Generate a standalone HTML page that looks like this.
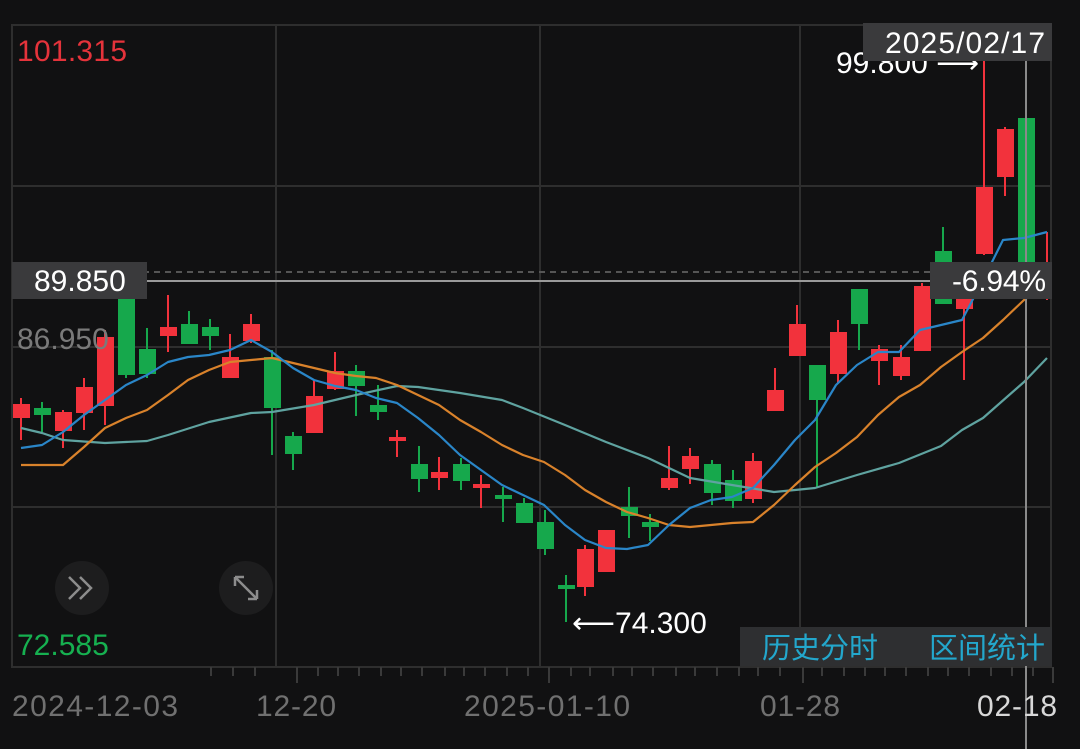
<!DOCTYPE html><html><head><meta charset="utf-8"><style>
html,body{margin:0;padding:0;background:#111112;width:1080px;height:749px;overflow:hidden}
svg{display:block}
text{font-family:"Liberation Sans","Noto Sans CJK SC",sans-serif}
</style></head><body>
<svg width="1080" height="749" viewBox="0 0 1080 749" xmlns="http://www.w3.org/2000/svg">
<rect width="1080" height="749" fill="#111112"/>
<g stroke="#2e2e2e" stroke-width="2" fill="none">
<rect x="12" y="25" width="1039" height="642"/>
<line x1="12" y1="186" x2="1051" y2="186"/><line x1="12" y1="347" x2="1051" y2="347"/><line x1="12" y1="507" x2="1051" y2="507"/>
<line x1="276" y1="25" x2="276" y2="667"/><line x1="540" y1="25" x2="540" y2="667"/><line x1="800" y1="25" x2="800" y2="667"/>
</g>
<g stroke="#3a3a3a" stroke-width="2">
<line x1="211" y1="667" x2="211" y2="676"/><line x1="233" y1="667" x2="233" y2="676"/><line x1="255" y1="667" x2="255" y2="676"/><line x1="297" y1="667" x2="297" y2="683"/><line x1="318" y1="667" x2="318" y2="676"/><line x1="338" y1="667" x2="338" y2="676"/><line x1="359" y1="667" x2="359" y2="676"/><line x1="381" y1="667" x2="381" y2="676"/><line x1="401" y1="667" x2="401" y2="676"/><line x1="422" y1="667" x2="422" y2="676"/><line x1="445" y1="667" x2="445" y2="676"/><line x1="464" y1="667" x2="464" y2="676"/><line x1="485" y1="667" x2="485" y2="676"/><line x1="507" y1="667" x2="507" y2="676"/><line x1="528" y1="667" x2="528" y2="676"/><line x1="549" y1="667" x2="549" y2="683"/><line x1="571" y1="667" x2="571" y2="676"/><line x1="590" y1="667" x2="590" y2="676"/><line x1="613" y1="667" x2="613" y2="676"/><line x1="632" y1="667" x2="632" y2="676"/><line x1="653" y1="667" x2="653" y2="676"/><line x1="676" y1="667" x2="676" y2="676"/><line x1="695" y1="667" x2="695" y2="676"/><line x1="717" y1="667" x2="717" y2="676"/><line x1="739" y1="667" x2="739" y2="676"/><line x1="758" y1="667" x2="758" y2="676"/><line x1="780" y1="667" x2="780" y2="676"/><line x1="803" y1="667" x2="803" y2="683"/><line x1="822" y1="667" x2="822" y2="676"/><line x1="844" y1="667" x2="844" y2="676"/><line x1="865" y1="667" x2="865" y2="676"/><line x1="885" y1="667" x2="885" y2="676"/><line x1="906" y1="667" x2="906" y2="676"/><line x1="928" y1="667" x2="928" y2="676"/><line x1="948" y1="667" x2="948" y2="676"/><line x1="969" y1="667" x2="969" y2="676"/><line x1="991" y1="667" x2="991" y2="676"/><line x1="1012" y1="667" x2="1012" y2="676"/><line x1="1033" y1="667" x2="1033" y2="676"/><line x1="1053" y1="667" x2="1053" y2="683"/>
</g>
<line x1="143" y1="272" x2="1051" y2="272" stroke="#555" stroke-width="2" stroke-dasharray="6,5"/>
<line x1="143" y1="281" x2="1051" y2="281" stroke="#9a9a9a" stroke-width="2"/>
<g stroke-width="2">
<g stroke="#f2323c" fill="#f2323c">
<line x1="21" y1="398" x2="21" y2="440"/><rect x="14" y="405" width="15" height="12"/>
<line x1="63" y1="410" x2="63" y2="448"/><rect x="56" y="413" width="15" height="17"/>
<line x1="84" y1="378" x2="84" y2="430"/><rect x="77" y="388" width="15" height="24"/>
<line x1="105" y1="330" x2="105" y2="425"/><rect x="98" y="338" width="15" height="67"/>
<line x1="168" y1="295" x2="168" y2="352"/><rect x="161" y="328" width="15" height="7"/>
<line x1="230" y1="334" x2="230" y2="378"/><rect x="223" y="358" width="15" height="19"/>
<line x1="251" y1="314" x2="251" y2="343"/><rect x="244" y="325" width="15" height="15"/>
<line x1="314" y1="380" x2="314" y2="432"/><rect x="307" y="397" width="15" height="35"/>
<line x1="335" y1="352" x2="335" y2="390"/><rect x="328" y="372" width="15" height="16"/>
<line x1="397" y1="430" x2="397" y2="457"/><rect x="390" y="438" width="15" height="2"/>
<line x1="439" y1="457" x2="439" y2="490"/><rect x="432" y="473" width="15" height="4"/>
<line x1="481" y1="475" x2="481" y2="508"/><rect x="474" y="485" width="15" height="2"/>
<line x1="585" y1="545" x2="585" y2="596"/><rect x="578" y="550" width="15" height="36"/>
<line x1="606" y1="531" x2="606" y2="572"/><rect x="599" y="531" width="15" height="40"/>
<line x1="669" y1="446" x2="669" y2="490"/><rect x="662" y="479" width="15" height="8"/>
<line x1="690" y1="448" x2="690" y2="484"/><rect x="683" y="457" width="15" height="11"/>
<line x1="753" y1="453" x2="753" y2="503"/><rect x="746" y="462" width="15" height="36"/>
<line x1="775" y1="368" x2="775" y2="410"/><rect x="768" y="391" width="15" height="19"/>
<line x1="797" y1="305" x2="797" y2="355"/><rect x="790" y="325" width="15" height="30"/>
<line x1="838" y1="320" x2="838" y2="383"/><rect x="831" y="333" width="15" height="40"/>
<line x1="879" y1="345" x2="879" y2="385"/><rect x="872" y="350" width="15" height="10"/>
<line x1="901" y1="345" x2="901" y2="380"/><rect x="894" y="358" width="15" height="17"/>
<line x1="922" y1="283" x2="922" y2="350"/><rect x="915" y="287" width="15" height="63"/>
<line x1="964" y1="300" x2="964" y2="380"/><rect x="957" y="300" width="15" height="8"/>
<line x1="984" y1="60" x2="984" y2="255"/><rect x="977" y="188" width="15" height="65"/>
<line x1="1005" y1="127" x2="1005" y2="196"/><rect x="998" y="130" width="15" height="46"/>
<line x1="1047" y1="232" x2="1047" y2="300"/>
</g>
<g stroke="#16a84c" fill="#16a84c">
<line x1="42" y1="402" x2="42" y2="432"/><rect x="35" y="409" width="15" height="5"/>
<line x1="126" y1="298" x2="126" y2="378"/><rect x="119" y="300" width="15" height="74"/>
<line x1="147" y1="328" x2="147" y2="378"/><rect x="140" y="350" width="15" height="23"/>
<line x1="189" y1="311" x2="189" y2="343"/><rect x="182" y="325" width="15" height="18"/>
<line x1="210" y1="319" x2="210" y2="350"/><rect x="203" y="328" width="15" height="7"/>
<line x1="272" y1="350" x2="272" y2="455"/><rect x="265" y="358" width="15" height="49"/>
<line x1="293" y1="432" x2="293" y2="470"/><rect x="286" y="437" width="15" height="16"/>
<line x1="356" y1="365" x2="356" y2="416"/><rect x="349" y="372" width="15" height="13"/>
<line x1="378" y1="385" x2="378" y2="420"/><rect x="371" y="406" width="15" height="5"/>
<line x1="419" y1="446" x2="419" y2="492"/><rect x="412" y="465" width="15" height="13"/>
<line x1="461" y1="458" x2="461" y2="490"/><rect x="454" y="465" width="15" height="15"/>
<line x1="503" y1="487" x2="503" y2="522"/><rect x="496" y="496" width="15" height="2"/>
<line x1="524" y1="498" x2="524" y2="522"/><rect x="517" y="504" width="15" height="18"/>
<line x1="545" y1="510" x2="545" y2="555"/><rect x="538" y="523" width="15" height="25"/>
<line x1="566" y1="575" x2="566" y2="622"/><rect x="559" y="586" width="15" height="2"/>
<line x1="629" y1="487" x2="629" y2="538"/><rect x="622" y="508" width="15" height="7"/>
<line x1="650" y1="514" x2="650" y2="541"/><rect x="643" y="523" width="15" height="3"/>
<line x1="712" y1="460" x2="712" y2="505"/><rect x="705" y="465" width="15" height="27"/>
<line x1="733" y1="470" x2="733" y2="508"/><rect x="726" y="481" width="15" height="19"/>
<line x1="817" y1="366" x2="817" y2="488"/><rect x="810" y="366" width="15" height="33"/>
<line x1="859" y1="290" x2="859" y2="350"/><rect x="852" y="290" width="15" height="33"/>
<line x1="943" y1="227" x2="943" y2="303"/><rect x="936" y="252" width="15" height="51"/>
<rect x="1019" y="119" width="15" height="171"/>
</g>
</g>
<g fill="none" stroke-width="2.2" stroke-linejoin="round">
<polyline stroke="#5fa3a0" points="21,428 42,433 63,440 105,443 147,441 168,435 209,422 251,413 272,412 314,405 356,395 397,386 418,387 439,390 460,393 502,400 523,408 565,425 606,442 648,458 690,478 732,485 774,492 795,490 815,488 857,475 899,463 941,446 962,430 983,418 1024,382 1047,358"/>
<polyline stroke="#d9822b" points="21,465 63,465 84,447 105,428 126,418 147,410 168,395 188,380 209,370 230,362 251,360 272,358 293,363 314,368 335,373 356,376 376,378 397,385 418,395 439,405 460,420 481,432 502,445 523,455 544,462 565,475 585,490 606,502 627,512 648,518 669,525 690,527 711,525 732,523 753,522 774,505 795,485 815,467 836,453 857,437 878,415 899,397 920,385 941,367 962,352 983,338 1003,320 1024,300 1047,285"/>
<polyline stroke="#2a86c8" points="21,448 42,445 63,432 84,415 105,400 126,385 147,375 168,362 188,357 209,355 230,350 251,340 272,352 293,368 314,380 335,386 356,390 376,398 397,403 418,418 439,435 460,455 481,470 502,485 523,495 544,505 565,525 585,540 606,548 627,549 648,545 669,525 690,508 711,500 732,497 753,488 774,465 795,440 815,420 836,385 857,365 878,352 899,352 920,330 941,325 962,320 983,280 1003,240 1024,238 1047,232"/>
</g>
<line x1="1026" y1="25" x2="1026" y2="749" stroke="#8a8a8a" stroke-width="2"/>
<text x="17" y="61" font-size="30" fill="#e5333b" textLength="110">101.315</text>
<text x="17" y="349" font-size="30" fill="#7a7a7a">86.950</text>
<text x="17" y="655" font-size="30" fill="#16b050">72.585</text>
<rect x="12" y="262" width="135" height="37" fill="#3a3a3c"/>
<text x="34" y="291" font-size="30" fill="#fff">89.850</text>
<rect x="930" y="262" width="122" height="37" fill="#3a3a3c"/>
<text x="952" y="291" font-size="30" fill="#fff" textLength="94">-6.94%</text>
<text x="836" y="73" font-size="30" fill="#fff">99.800 ⟶</text>
<rect x="863" y="23" width="189" height="38" fill="#3a3a3c"/>
<text x="885" y="53" font-size="30" fill="#fff" textLength="160">2025/02/17</text>
<text x="572" y="633" font-size="30" fill="#fff">⟵74.300</text>
<rect x="740" y="627" width="312" height="39" fill="#2e2f31"/>
<text x="762" y="658" font-size="29" fill="#23a7cc">历史分时</text>
<text x="929" y="658" font-size="29" fill="#23a7cc">区间统计</text>
<circle cx="82" cy="588" r="27" fill="#1d1d1e"/>
<path d="M69 577 L80 588 L69 599 M80 577 L91 588 L80 599" stroke="#8c8c8c" stroke-width="2.5" fill="none"/>
<circle cx="246" cy="588" r="27" fill="#1d1d1e"/>
<path d="M235 577 L257 599 M235 577 L235 586 M235 577 L244 577 M257 599 L257 590 M257 599 L248 599" stroke="#8c8c8c" stroke-width="2.5" fill="none"/>
<g font-size="30" fill="#707070">
<text x="12" y="716" textLength="166">2024-12-03</text>
<text x="256" y="716" textLength="80">12-20</text>
<text x="464" y="716" textLength="166">2025-01-10</text>
<text x="760" y="716" textLength="80">01-28</text>
<text x="977" y="716" fill="#d8d8d8" textLength="80">02-18</text>
</g>
</svg>
</body></html>
